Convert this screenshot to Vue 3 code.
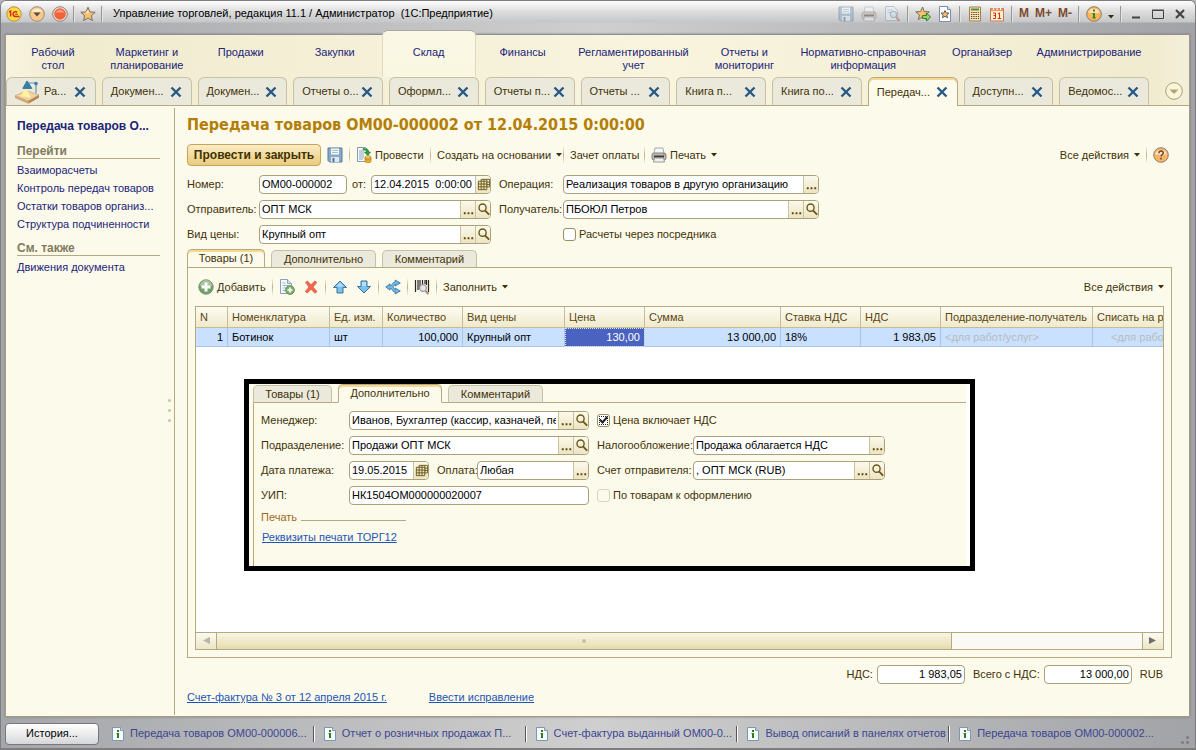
<script setup>
import { h, ref } from 'vue'

const glyphs = {
  logo: '<circle cx="8" cy="8" r="7.2" fill="#fbdc3f" stroke="#b98a4a"/><path d="M3 6.2 4.6 5.2V10.6M11.2 6.4a2.4 2.4 0 1 0-2.2 4H13.4" fill="none" stroke="#d8281c" stroke-width="1.5"/><path d="M9 8.3h3" stroke="#d8281c"/>',
  down: '<circle cx="8" cy="8" r="7.3" fill="#f6c98a" stroke="#9c8a78"/><path d="M2.5 6A6 6 0 0 1 13.500 6z" fill="#fde9cd"/><path d="M4.500 6.500h7L8 10.500z" fill="#5e4a3c"/>',
  round: '<circle cx="8" cy="8" r="7.3" fill="#f7dfcf" stroke="#8c817c"/><circle cx="8" cy="8" r="5.8" fill="#f4623c"/><path d="M3.500 6.500a5 5 0 0 1 9 0z" fill="#fb9c7c"/>',
  star: '<path d="M8 1.200 10 6l5.200.3-4 3.400 1.300 5L8 12l-4.500 2.700 1.300-5-4-3.400L6 6z" fill="#fcc268" stroke="#77706a"/><path d="M8 3.500 9.200 7 5 7.500z" fill="#fee6bd"/>',
  save: '<path d="M1 1h14v14H2.500L1 13.500z" fill="#87a9c6" stroke="#557b9c"/><path d="M4 1.500h8v6H4z" fill="#f4f8fb"/><path d="M5 3.500h6M5 5.500h6" stroke="#a9bccb"/><path d="M4 10h8v5H4z" fill="#dfe8ef"/><path d="M5.500 11h2v4h-2z" fill="#4f7496"/>',
  printer: '<path d="M4 1h8l1 6H3z" fill="#f5f7f9" stroke="#a3a9ae"/><rect x="1" y="6" width="14" height="7" rx="2" fill="#bdbab7" stroke="#85817e"/><path d="M3 8.500h10v2H3z" fill="#3f3d3b"/><path d="M3.500 11h9l1 4h-11z" fill="#f3f1ee" stroke="#9b9996"/><circle cx="13" cy="7.500" r=".8" fill="#d36c38"/>',
  preview: '<path d="M1.500.5h8l4 4v10h-12z" fill="#e8f0f6" stroke="#86a0b5"/><path d="M3.500 4h5M3.500 6.500h4" stroke="#9ab0c1"/><circle cx="9.500" cy="8.500" r="3.200" fill="#cfe2f0" stroke="#648098"/><path d="m12 11 3.500 4" stroke="#a06d58" stroke-width="2"/>',
  starAdd: '<path d="M7.500 1 9.300 5.600l5 .2-3.800 3.200 1.200 4.600-4.200-2.600-4.200 2.600L4.500 9 .7 5.800l5-.2z" fill="#fcc268" stroke="#77706a"/><path d="M7.500 9.500h4V7l4.200 4-4.200 4v-2.500h-4z" fill="#93d26a" stroke="#3f7d2e"/>',
  starPage: '<path d="M2.500.5h8l3 3v12h-11z" fill="#fff" stroke="#7592a9"/><path d="M10.500.5v3h3" fill="#d9e6ef" stroke="#7592a9"/><path d="m8 4.500 1.200 2.500 2.800.2-2.200 1.800.8 2.800L8 10.300l-2.600 1.500L6.200 9 4 7.200 6.800 7z" fill="#fcc268" stroke="#65615b"/>',
  calc: '<path d="M2.500 1h11v14h-11z" fill="#f9e2b1" stroke="#9c8355"/><path d="M4 2.500h8v2H4z" fill="#4f9141"/><path d="M4 6.500h8M4 8.500h8M4 10.500h8M4 12.500h8" stroke="#4b443a" stroke-dasharray="1.300 1"/><path d="M4 6.500h8" stroke="#cf4e2e" stroke-dasharray="1.300 1"/>',
  calendar: '<path d="M1.500 2.500h13V15h-13z" fill="#fbeecb" stroke="#c07a50"/><path d="M2 2.500h12V5H2z" fill="#ef9466"/><path d="M4.500 1v3M8 1v3M11.500 1v3" stroke="#fff"/><path d="M4 7h2.500v5.500H4M4.500 9.500h2M9 8l1.500-1.200v6M8.800 12.500h3.400" fill="none" stroke="#dc2d1d"/>',
  info: '<circle cx="8" cy="8" r="7.300" fill="#f7b658" stroke="#8e7c6b"/><path d="M2.200 7a6 6 0 0 1 11.600 0z" fill="#fce0b4"/><path d="M7 3.500h2v2H7zM6.300 7H9v4.500h.9v1H6.300v-1H7V8h-.7z" fill="#3b8424"/>',
  help: '<circle cx="8" cy="8" r="7.300" fill="#f6b665" stroke="#927c68"/><path d="M2.200 7.500a6 6 0 0 1 11.600 0z" fill="#fde5c9"/><path d="M5.800 6.300C5.900 3.300 10.500 3.500 10.300 6c-.1 1.500-2 1.600-2.200 3.400M8 10.800v1.700" fill="none" stroke="#6b4632" stroke-width="1.500"/>',
  post: '<path d="M1.500.5h8l3 3v11h-11z" fill="#f7fafc" stroke="#829bb0"/><path d="M3 4h5M3 6h5M3 8h5M3 10h5M3 12h4" stroke="#8ba3b6"/><path d="M7 1.500c4-.5 5.500 1 5.500 3.500h2.200L11.500 8.500 8.300 5h2.200C10.500 3.500 9 3 7 3z" fill="#2f9e3f" stroke="#1f7a2d" stroke-width=".5"/><path d="M9 10v4.500c0 1.500 6 1.500 6 0V10z" fill="#efb42e" stroke="#b37d14" stroke-width=".7"/><path d="M9 12.200c1 1 5 1 6 0" fill="none" stroke="#b37d14" stroke-width=".7"/><ellipse cx="12" cy="10" rx="3" ry="1.200" fill="#fde07b" stroke="#b37d14" stroke-width=".7"/>',
  add: '<circle cx="8" cy="8" r="7.200" fill="#6fa366" stroke="#7d8b78"/><path d="M2 7a6 6 0 0 1 12 0z" fill="#a3c99a"/><path d="M6.500 3.500h3v3h3v3h-3v3h-3v-3h-3v-3h3z" fill="#fff"/>',
  copy: '<path d="M1.500.5h7l4 4v10h-11z" fill="#f5f9fc" stroke="#87a2b8"/><path d="M8.500.5v4h4" fill="#d4e2ed" stroke="#87a2b8"/><path d="M3.500 4h3M3.500 6.500h6M3.500 9h4M3.500 11.500h3" stroke="#9cb3c5"/><circle cx="11" cy="11" r="4.300" fill="#81b36c" stroke="#5f8553"/><path d="M11 8.500v5M8.500 11h5" stroke="#fff" stroke-width="1.600"/>',
  remove: '<path d="m2.500 3.500 2-1.500L8 5.800 11.800 2l2 1.500L10 8l4 4.500-2 1.700L8 10.300 4.300 14l-2-1.500L6 8z" fill="#f4694f" stroke="#d84a36" stroke-width=".7"/>',
  up: '<path d="M8 2 14.500 8.500H11V14H5V8.500H1.500z" fill="#7cc0ec" stroke="#39759f"/><path d="m8 3.800 3.500 3.700H4.500z" fill="#b9e0f7"/>',
  dn: '<path d="M8 14 1.500 7.500H5V2h6v5.500h3.500z" fill="#7cc0ec" stroke="#39759f"/><path d="M6 3h4v4H6z" fill="#b9e0f7"/>',
  fork: '<path d="M3 8h2.500C8 8 8 4 10.500 4M5.500 8C8 8 8 12 10.500 12" fill="none" stroke="#2f709e" stroke-width="3.200"/><path d="M.8 8 5 4.800v6.400zM10.200 1 15.300 4l-5.100 3zM10.200 9l5.100 3-5.100 3z" fill="#6fb6e4" stroke="#2f709e" stroke-width=".8"/><path d="M3 8h2.500C8 8 8 4 10.800 4M5.500 8C8 8 8 12 10.800 12" fill="none" stroke="#7cc0ec" stroke-width="1.700"/>',
  barcode: '<path d="M1.500 1v12M4 1v10M6 1v9M8.500 1v4M11 1v4M12.500 1v5M14.500 1v12" stroke="#272522" stroke-width="1.200"/><circle cx="9" cy="9" r="3.500" fill="#dbe6f1" stroke="#998178"/><path d="m11.500 12 3 3" stroke="#b08272" stroke-width="2"/>',
  desk: '<path d="m0 13 10-4 10 3.500-9 5z" fill="#eed3a6" stroke="#c79a64" stroke-width=".5"/><path d="m0 13 11 4.500v2.300L0 15z" fill="#d3a673"/><path d="m11 17.500 9-5v2.300l-9 5z" fill="#b88452"/><path d="M9.500 6 4.500 13.500l8.500 1z" fill="#fff3a0"/><path d="M10 .8 6.500 7h7.500l-3-5z" fill="#2f83b5" stroke="#1c5d86" stroke-width=".6"/><path d="M11 2.500h6.500V11" fill="none" stroke="#5f97ba"/><circle cx="17.500" cy="3" r="1.500" fill="#3e7ea6"/>',
  cross: '<path d="m3.500 3.500 9 9M12.500 3.500l-9 9" stroke="#275b86" stroke-width="2.400"/>',
  lens: '<circle cx="7" cy="6" r="3.800" fill="none" stroke="#6b5618" stroke-width="1.500"/><path d="m9.500 9 4.500 4.500" stroke="#6b5618" stroke-width="2"/>',
  grid: '<path d="M5.500 2.500h9v8h-9zM8.500 2.500v8M11.500 2.500v8M5.500 5.500h9M5.500 8h9" fill="none" stroke="#6b5618"/><path d="M2.500 4.500h9v9h-9z" fill="#efe7c6" stroke="#6b5618"/><path d="M5.500 4.500v9M8.500 4.500v9M2.500 7.500h9M2.500 10.500h9" stroke="#6b5618"/>',
  dots: '<path d="M3 11h2v2H3zM7 11h2v2H7zM11 11h2v2h-2z" fill="#5c4708"/>',
  pageInfo: '<path d="M2.500 1.500h8l3 3v10h-11z" fill="#f4fafd" stroke="#7d98aa"/><path d="M10.500 1.500v3h3" fill="#cfe0ea" stroke="#7d98aa"/><path d="M7 4h2v2H7zM6.500 7H9v5H7V8h-.5z" fill="#347a1b"/>',
  round2: '<circle cx="9" cy="9" r="8.300" fill="#faf5dc" stroke="#aaa06c"/><path d="M4.500 7.500h9L9 12z" fill="#b0a66c"/>',
  minimize: '<path d="M4 11.500h8" stroke="#444" stroke-width="2"/>',
  maximize: '<path d="M2.500 4.500h11v8h-11zM2 4h12" fill="none" stroke="#444"/>',
  close: '<path d="m4 4 8 8M12 4l-8 8" stroke="#444" stroke-width="2.200"/>',
  caret: '<path d="M0 0h6L3 3.500z" fill="#3b2f05"/>',
  left: '<path d="M10 2v7L3 5.500z" fill="#b8b5a4"/>',
  right: '<path d="M2 2v7l7-3.500z" fill="#6f6e68"/>'
}

const Glyph = ({ n, s = 16, box = 16 }) =>
  h('svg', { class: 'glyph', width: s, height: s, viewBox: `0 0 ${box} ${box}`, innerHTML: glyphs[n], 'aria-hidden': 'true' })
const Caret = () => h('svg', { class: 'caret', width: 6, height: 4, viewBox: '0 0 6 4', innerHTML: glyphs.caret, 'aria-hidden': 'true' })

const names = { dots: 'Выбрать', lens: 'Открыть', grid: 'Календарь' }
const Field = ({ id, value, b = [], ro }) =>
  h('div', { class: ['field', ro && 'ro'] }, [
    h('input', { id, value, readonly: !!ro, type: 'text' }),
    ...b.map(n => h('button', { type: 'button', 'aria-label': names[n] }, [h(Glyph, { n })]))
  ])

const sections = ['Рабочий\nстол', 'Маркетинг и\nпланирование', 'Продажи', 'Закупки', 'Склад', 'Финансы', 'Регламентированный\nучет', 'Отчеты и\nмониторинг', 'Нормативно-справочная\nинформация', 'Органайзер', 'Администрирование']
const tabs = ['Ра...', 'Докумен...', 'Докумен...', 'Отчеты о...', 'Оформл...', 'Отчеты п...', 'Отчеты ...', 'Книга п...', 'Книга по...', 'Передач...', 'Доступн...', 'Ведомос...']
const goTo = ['Взаиморасчеты', 'Контроль передач товаров', 'Остатки товаров организ...', 'Структура подчиненности']
const history = ['Передача товаров ОМ00-000006...', 'Отчет о розничных продажах П...', 'Счет-фактура выданный ОМ00-0...', 'Вывод описаний в панелях отчетов', 'Передача товаров ОМ00-000002...']
const columns = [
  { t: 'N', c: 'w32' }, { t: 'Номенклатура', c: 'w102' }, { t: 'Ед. изм.', c: 'w53' }, { t: 'Количество', c: 'w80' },
  { t: 'Вид цены', c: 'w102' }, { t: 'Цена', c: 'w80' }, { t: 'Сумма', c: 'w136' }, { t: 'Ставка НДС', c: 'w80' },
  { t: 'НДС', c: 'w80' }, { t: 'Подразделение-получатель', c: 'w152' }, { t: 'Списать на р', c: 'rest' }
]
const cells = [
  { v: '1', c: 'num' }, { v: 'Ботинок' }, { v: 'шт' }, { v: '100,000', c: 'num' }, { v: 'Крупный опт' }, { v: '130,00', c: 'num picked' },
  { v: '13 000,00', c: 'num' }, { v: '18%' }, { v: '1 983,05', c: 'num' }, { v: '<для работ/услуг>', c: 'hint' }, { v: '<для рабо', c: 'hint inset' }
]
const middleman = ref(false)
const vatIncluded = ref(true)
</script>

<template>
  <div class="window">
    <header class="titlebar">
      <Glyph n="logo" /><Glyph n="down" class="gap7" /><Glyph n="round" class="gap7" />
      <i class="bar" /><Glyph n="star" /><i class="bar" />
      <span class="caption">Управление торговлей, редакция 11.1 / Администратор&nbsp; (1С:Предприятие)</span>
      <div class="tools">
        <Glyph n="save" class="dim" /><Glyph n="printer" class="dim" /><Glyph n="preview" class="dim" /><i class="bar" />
        <Glyph n="starAdd" /><Glyph n="starPage" /><i class="bar" />
        <Glyph n="calc" /><Glyph n="calendar" /><i class="bar" />
        <button class="mem">M</button><button class="mem">M+</button><button class="mem">M-</button><i class="bar" />
        <Glyph n="info" /><Caret class="low" /><i class="bar" />
        <Glyph n="minimize" /><Glyph n="maximize" /><Glyph n="close" />
      </div>
    </header>

    <div class="client">
      <nav class="sections">
        <a v-for="s in sections" :key="s" href="#" :class="{ on: s === 'Склад' }"><span>{{ s }}</span></a>
      </nav>
      <div class="doctabs">
        <div v-for="(t, i) in tabs" :key="i" class="doctab" :class="{ on: i === 9 }">
          <Glyph v-if="i === 0" n="desk" :s="24" :box="20" />
          <span>{{ t }}</span>
          <button aria-label="Закрыть"><Glyph n="cross" /></button>
        </div>
        <button class="more" aria-label="Список вкладок"><Glyph n="round2" :s="18" :box="18" /></button>
      </div>

      <div class="page">
        <aside class="side">
          <h2>Передача товаров О...</h2>
          <h3>Перейти</h3>
          <a v-for="g in goTo" :key="g" href="#">{{ g }}</a>
          <h3 class="second">См. также</h3>
          <a href="#">Движения документа</a>
          <i class="grip"><b /><b /><b /></i>
        </aside>

        <main class="doc">
          <h1>Передача товаров ОМ00-000002 от 12.04.2015 0:00:00</h1>
          <div class="toolbar main">
            <button class="primary">Провести и закрыть</button>
            <button aria-label="Записать"><Glyph n="save" /></button><i class="sep" />
            <button class="b68"><Glyph n="post" />Провести</button><i class="sep" />
            <button class="b120">Создать на основании<Caret /></button><i class="sep" />
            <button class="b68">Зачет оплаты</button><i class="sep" />
            <button><Glyph n="printer" />Печать<Caret /></button>
            <span class="grow" />
            <button>Все действия<Caret /></button><i class="sep" />
            <button aria-label="Справка"><Glyph n="help" /></button>
          </div>

          <div class="form">
            <div class="row">
              <label class="l72" for="num">Номер:</label><Field id="num" class="f88" value="ОМ00-000002" ro />
              <label class="l24 mid" for="date">от:</label><Field id="date" class="f120" value="12.04.2015  0:00:00" :b="['grid']" />
              <label class="l72 pad" for="op">Операция:</label><Field id="op" class="f256" value="Реализация товаров в другую организацию" :b="['dots']" />
            </div>
            <div class="row">
              <label class="l72" for="from">Отправитель:</label><Field id="from" class="f232" value="ОПТ МСК" :b="['dots', 'lens']" />
              <label class="l72 pad" for="to">Получатель:</label><Field id="to" class="f256" value="ПБОЮЛ Петров" :b="['dots', 'lens']" />
            </div>
            <div class="row">
              <label class="l72" for="kind">Вид цены:</label><Field id="kind" class="f232" value="Крупный опт" :b="['dots', 'lens']" />
              <label class="check far"><input v-model="middleman" type="checkbox">Расчеты через посредника</label>
            </div>
          </div>

          <div class="tabs">
            <button class="on">Товары (1)</button><button class="t105">Дополнительно</button><button class="t95">Комментарий</button>
          </div>
          <section class="pane">
            <div class="toolbar inner">
              <button class="b68"><Glyph n="add" />Добавить</button><i class="sep" />
              <button aria-label="Скопировать"><Glyph n="copy" /></button>
              <button aria-label="Удалить" class="wide"><Glyph n="remove" /></button><i class="sep" />
              <button aria-label="Вверх"><Glyph n="up" /></button>
              <button aria-label="Вниз" class="wide"><Glyph n="dn" /></button><i class="sep" />
              <button aria-label="Разбить строку"><Glyph n="fork" /></button><i class="sep" />
              <button aria-label="Штрихкод"><Glyph n="barcode" /></button><i class="sep" />
              <button>Заполнить<Caret /></button>
              <span class="grow" />
              <button>Все действия<Caret /></button>
            </div>
            <div class="grid">
              <div class="scrollarea">
                <table>
                  <thead><tr><th v-for="c in columns" :key="c.t" :class="c.c">{{ c.t }}</th></tr></thead>
                  <tbody><tr><td v-for="(c, i) in cells" :key="i" :class="c.c">{{ c.v }}</td></tr></tbody>
                </table>
              </div>
              <div class="hscroll">
                <button aria-label="Влево"><Glyph n="left" :s="12" :box="12" /></button>
                <div class="track"><div class="thumb"><b /></div></div>
                <button aria-label="Вправо"><Glyph n="right" :s="12" :box="12" /></button>
              </div>
            </div>

            <div class="overlay">
              <div class="sheet">
                <div class="tabs">
                  <button class="t79">Товары (1)</button><button class="on t104">Дополнительно</button><button class="t95">Комментарий</button>
                </div>
                <div class="form extra">
                  <div class="row">
                    <label class="l88" for="mgr">Менеджер:</label><Field id="mgr" class="f240" value="Иванов, Бухгалтер (кассир, казначей, пенсионер)" :b="['dots', 'lens']" />
                    <label class="check near"><input v-model="vatIncluded" type="checkbox" class="focus">Цена включает НДС</label>
                  </div>
                  <div class="row">
                    <label class="l88" for="dep">Подразделение:</label><Field id="dep" class="f240" value="Продажи ОПТ МСК" :b="['dots', 'lens']" />
                    <label class="l104" for="tax">Налогообложение:</label><Field id="tax" class="f192" value="Продажа облагается НДС" :b="['dots']" />
                  </div>
                  <div class="row">
                    <label class="l88" for="pay">Дата платежа:</label><Field id="pay" class="f80" value="19.05.2015" :b="['grid']" />
                    <label class="l48" for="way">Оплата:</label><Field id="way" class="f112" value="Любая" :b="['dots']" />
                    <label class="l104" for="acc">Счет отправителя:</label><Field id="acc" class="f192" value=", ОПТ МСК (RUB)" :b="['dots', 'lens']" />
                  </div>
                  <div class="row">
                    <label class="l88" for="uip">УИП:</label><Field id="uip" class="f240" value="НК1504ОМ000000020007" ro />
                    <label class="check near"><input type="checkbox" disabled>По товарам к оформлению</label>
                  </div>
                  <div class="group"><span>Печать</span><i /></div>
                  <a href="#" class="link">Реквизиты печати ТОРГ12</a>
                </div>
              </div>
            </div>
          </section>

          <div class="totals">
            <label for="vat">НДС:</label><Field id="vat" class="f88 right" value="1 983,05" ro />
            <label for="sum">Всего с НДС:</label><Field id="sum" class="f88 right" value="13 000,00" ro />
            <span>RUB</span>
          </div>
          <div class="links">
            <a href="#" class="link">Счет-фактура № 3 от 12 апреля 2015 г.</a>
            <a href="#" class="link">Ввести исправление</a>
          </div>
        </main>
      </div>
    </div>

    <footer class="taskbar">
      <button class="hist">История...</button>
      <a v-for="(t, i) in history" :key="i" href="#"><Glyph n="pageInfo" /><span>{{ t }}</span></a>
      <i class="resize" />
    </footer>
  </div>
</template>

<style>
body { margin: 0; background: #b4b5b8; }
</style>

<style scoped>
.window { min-height: 100vh; box-sizing: border-box; display: flex; flex-direction: column; padding: 0 5px; border: 1px solid #7d7d7d; border-bottom-width: 2px; border-radius: 6px 6px 0 0; background: linear-gradient(90deg, #a5a6aa, #cfcfcf 50%, #a2a3a7); font: 11px/13px "Liberation Sans", Arial, sans-serif; color: #3f3206; }
button { font: inherit; color: inherit; border: 0; padding: 0; background: none; white-space: nowrap; }
a { text-decoration: none; color: #1b2478; }
h1, h2, h3 { margin: 0; }
.glyph, .caret { flex: none; display: block; }

.titlebar { height: 33px; box-sizing: border-box; display: flex; align-items: center; padding: 0 7px 8px 5px; margin: 0 -5px; background: linear-gradient(#fdfdfd, #d9d9da 12px, #c6c7c9 21px, transparent 22px); border-radius: 5px 5px 0 0; }
.gap7 { margin-left: 7px; }
.bar { width: 1px; height: 16px; background: #97989b; border-right: 1px solid #e4e4e4; margin: 0 5px; flex: none; }
.caption { color: #000; white-space: nowrap; margin-left: 5px; }
.tools { margin-left: auto; display: flex; align-items: center; gap: 6px; }
.tools .bar { margin: 0; }
.dim { opacity: .5; margin-right: 1px; }
.mem { color: #7d4a2c; font-weight: bold; font-size: 12px; }
.low { margin-top: 6px; }

.client { flex: 1; display: flex; flex-direction: column; border: 1px solid #a39c81; border-top-color: #8f9094; background: #fcfaeb; box-shadow: 0 0 2px #77787b; margin: 0 0 0 -1px; }
.sections { height: 42px; display: grid; grid-template-columns: repeat(6, 94fr) 128fr 94fr 144fr 94fr 120fr; padding-right: 40px; background: linear-gradient(90deg, #f8f4e0, #f1ebcf 5%, #f8f4de 55%, #f1ebd0 97%, #f4efda); }
.sections a { text-align: center; padding-top: 11px; min-width: 0; white-space: pre-line; }
.sections .on { background: linear-gradient(#fbf9e6, #f9f6e1); margin-top: -5px; padding-top: 15px; border-radius: 6px 6px 0 0; border: 1px solid; border-color: #a8a8a4 #dedabb transparent; }
.doctabs { height: 28px; display: flex; gap: 6px; align-items: flex-end; padding-right: 6px; background: linear-gradient(90deg, #f8f4e0, #f1ebcf 5%, #f8f4de 55%, #f1ebd0 97%, #f4efda); border-bottom: 1px solid #b3aa80; }
.doctab { flex: 1 1 0; min-width: 0; height: 28px; display: flex; align-items: center; box-sizing: border-box; padding: 0 7px 0 8px; border: 1px solid #c6c1a3; border-bottom: 0; border-radius: 6px 6px 0 0; background: #ebe9db; white-space: nowrap; }
.doctab span { flex: 1; min-width: 0; }
.doctab .glyph { margin-right: 5px; }
.doctab button .glyph { margin: 0; }
.doctab.on { background: #fcfaeb; border-color: #b3aa80; box-shadow: inset 0 2px #f8d791; height: 29px; margin-bottom: -1px; }
.more { margin: 0 0 5px 10px; }

.page { flex: 1; display: flex; }
.side { width: 169px; flex: none; box-sizing: border-box; border-right: 1px solid #b3aa80; margin: 2px 0 1px; padding: 11px 14px 0 11px; display: flex; flex-direction: column; position: relative; color: #1b2478; white-space: nowrap; }
.side h2 { font-size: 12px; line-height: 14px; }
.side h3 { color: #827b5e; font-size: 12px; line-height: 14px; border-bottom: 1px solid #b3aa80; margin: 11px 0 2px; }
.side h3.second { margin-top: 8px; }
.side a { line-height: 18px; }
.grip { position: absolute; right: 3px; top: 291px; display: flex; flex-direction: column; gap: 7px; }
.grip b { width: 3px; height: 3px; border-radius: 2px; background: #c9c4a6; }

.doc { flex: 1; min-width: 0; display: flex; flex-direction: column; padding: 8px 16px 12px 12px; }
h1 { font: bold 16px/22px "DejaVu Sans Condensed", "DejaVu Sans", sans-serif; color: #b47e04; white-space: nowrap; }
.toolbar { display: flex; align-items: center; height: 22px; margin-top: 8px; gap: 6px; }
.toolbar button { display: flex; align-items: center; gap: 3px; }
.toolbar .caret { margin-left: 2px; }
.toolbar .sep { width: 1px; height: 18px; background: linear-gradient(transparent, #b9b08a, transparent); }
.toolbar .primary { width: 134px; height: 22px; justify-content: center; font-weight: bold; font-size: 12px; border: 1px solid #c9a452; border-radius: 4px; background: linear-gradient(#fbedc9, #f1d894 60%, #e9cb82); }
.toolbar .b68 { width: 68px; }
.toolbar .b120 { width: 120px; }
.toolbar .wide { margin-left: 2px; }
.main { padding-right: 4px; }
.toolbar.inner { margin: 8px 0; padding: 0 0 0 3px; }
.grow { flex: 1; }

.form { margin-top: 8px; display: flex; flex-direction: column; gap: 5px; }
.row { display: flex; align-items: center; height: 20px; white-space: nowrap; }
.l72 { width: 72px; } .l24 { width: 24px; } .l88 { width: 88px; } .l104 { width: 96px; padding-left: 8px; } .l48 { width: 40px; padding-left: 8px; }
.mid { text-align: center; }
.pad { width: 64px; padding-left: 8px; }
.field { display: flex; box-sizing: border-box; height: 19px; border: 1px solid #aba07a; border-radius: 4px; background: #fff; overflow: hidden; }
.field.ro { background: #fcfaeb; box-shadow: inset 0 0 0 1px #fff; }
.field :deep(input) { flex: 1; min-width: 0; width: 0; border: 0; padding: 0 2px; margin: 0; background: none; font: inherit; color: #000; outline: 0; white-space: pre; }
.field :deep(button) { width: 15px; padding: 0; border: 0; border-left: 1px solid #cbc39c; background: linear-gradient(#fbf9ec, #ece5c3); display: flex; align-items: center; justify-content: center; }
.field :deep(svg) { width: 15px; height: 15px; flex: none; }
.f80 { width: 80px; } .f88 { width: 88px; } .f112 { width: 112px; } .f120 { width: 120px; } .f192 { width: 192px; } .f232 { width: 232px; } .f240 { width: 240px; } .f256 { width: 256px; }
.right :deep(input) { text-align: right; }
.check { display: flex; align-items: center; gap: 3px; }
.far { margin-left: 72px; } .near { margin-left: 8px; }
.check input { appearance: none; margin: 0; width: 13px; height: 13px; border: 1px solid #9b8f62; border-radius: 3px; background: #fff; display: grid; place-items: center; }
.check input:disabled { border-color: #d9d5bf; background: #fcfaeb; }
.check input:checked::after { content: ""; width: 3px; height: 6px; border: solid #222; border-width: 0 2px 2px 0; transform: rotate(42deg); margin-bottom: 2px; }
.focus { outline: 1px dotted #223; outline-offset: -3px; }

.tabs { display: flex; gap: 6px; align-items: flex-end; margin: 5px 0 -1px; position: relative; height: 19px; }
.tabs button { height: 18px; box-sizing: border-box; border: 1px solid #c6c1a3; border-bottom-color: #b3aa80; border-radius: 5px 5px 0 0; background: #ebe9db; width: 78px; }
.tabs .on { background: #fcfaeb; border-color: #b3aa80; border-bottom-color: #fcfaeb; box-shadow: inset 0 2px #f8d791; height: 19px; }
.tabs .t105 { width: 105px; } .tabs .t95 { width: 95px; } .tabs .t79 { width: 79px; } .tabs .t104 { width: 104px; }
.pane { flex: 1; border: 1px solid #b3aa80; padding: 0 7px 7px; display: flex; flex-direction: column; position: relative; margin-right: 1px; }
.grid { flex: 1; border: 1px solid #b3aa80; background: #fff; display: flex; flex-direction: column; min-width: 0; }
.scrollarea { flex: 1; overflow: hidden; }
table { border-collapse: separate; border-spacing: 0; table-layout: fixed; width: 100%; }
th, td { box-sizing: border-box; padding: 0 4px; text-align: left; font-weight: normal; white-space: nowrap; overflow: hidden; }
th { height: 21px; color: #5a4710; border-right: 1px solid #c6bd97; border-bottom: 1px solid #c6bd97; background: linear-gradient(#fdfcf3, #f0e9cc); }
td { height: 19px; color: #000; background: #c9e1ff; border-right: 1px solid #a9c4e6; border-bottom: 1px solid #a9c4e6; }
th:last-child, td:last-child { border-right: 0; padding-right: 0; }
.w32 { width: 32px; } .w53 { width: 53px; } .w80 { width: 80px; } .w102 { width: 102px; } .w136 { width: 136px; } .w152 { width: 152px; }
.num { text-align: right; }
.picked { background: #4a63c0; color: #fff; outline: 1px dotted #dde4ff; outline-offset: -1px; }
.hint { color: #b9bbb9; }
.inset { padding-left: 18px; }
.hscroll { display: flex; height: 16px; border-top: 1px solid #b3aa80; background: #faf9f3; }
.hscroll button { width: 20px; display: grid; place-items: center; background: linear-gradient(#fbfaf2, #ece6c6); }
.track { flex: 1; border: solid #b3aa80; border-width: 0 1px; }
.thumb { width: 79.500%; height: 100%; box-sizing: border-box; border-right: 1px solid #b3aa80; background: linear-gradient(#f8f5e3, #ede5be 70%, #e2d9ad); display: grid; place-items: center; }
.thumb b { width: 4px; height: 4px; border-radius: 2px; background: #c5c0a6; }

.overlay { position: absolute; left: 56px; top: 111px; width: 721px; height: 182px; border: 5px solid #000; background: #fff; }
.sheet { height: 100%; margin-right: 4px; background: #fcfaeb; padding-left: 4px; box-sizing: border-box; display: flex; flex-direction: column; }
.sheet .tabs { margin-top: 0; }
.extra { flex: 1; margin: 0; padding: 7px 0 0 7px; border: solid #b3aa80; border-width: 1px 0 0 1px; }
.group { display: flex; align-items: center; gap: 4px; color: #a0681a; margin-top: 1px; }
.group i { width: 105px; height: 1px; background: #b3aa80; margin-top: 5px; }
.link { color: #2155b5; text-decoration: underline; }
.extra .link { margin: 2px 0 0 1px; }
.totals { display: flex; justify-content: flex-end; align-items: center; gap: 8px; margin-top: 6px; padding-right: 10px; height: 20px; white-space: nowrap; }
.totals label { margin-right: -4px; }
.links { display: flex; gap: 42px; margin-top: 7px; white-space: nowrap; }

.taskbar { height: 29px; padding-top: 2px; display: flex; align-items: center; position: relative; padding-right: 21px; }
.hist { width: 94px; height: 22px; border: 1px solid #77787b; border-radius: 4px; background: linear-gradient(#fff, #ededee 50%, #d5d6d8); color: #000; margin-right: 11px; margin-left: -1px; flex: none; }
.taskbar a { flex: 1 1 0; min-width: 0; display: flex; align-items: center; gap: 4px; color: #3c4691; white-space: nowrap; height: 16px; border-right: 1px solid #fff; box-shadow: inset -1px 0 #55565a; margin-right: 7px; }
.taskbar a:nth-of-type(5) { border-color: transparent; box-shadow: none; }
.resize { position: absolute; right: 0; bottom: 3px; width: 10px; height: 10px; background: radial-gradient(circle, #7d7e82 1px, transparent 2px) 0 0 / 5px 5px; clip-path: polygon(100% 0, 100% 100%, 0 100%, 0 50%, 50% 50%, 50% 0); }
</style>
